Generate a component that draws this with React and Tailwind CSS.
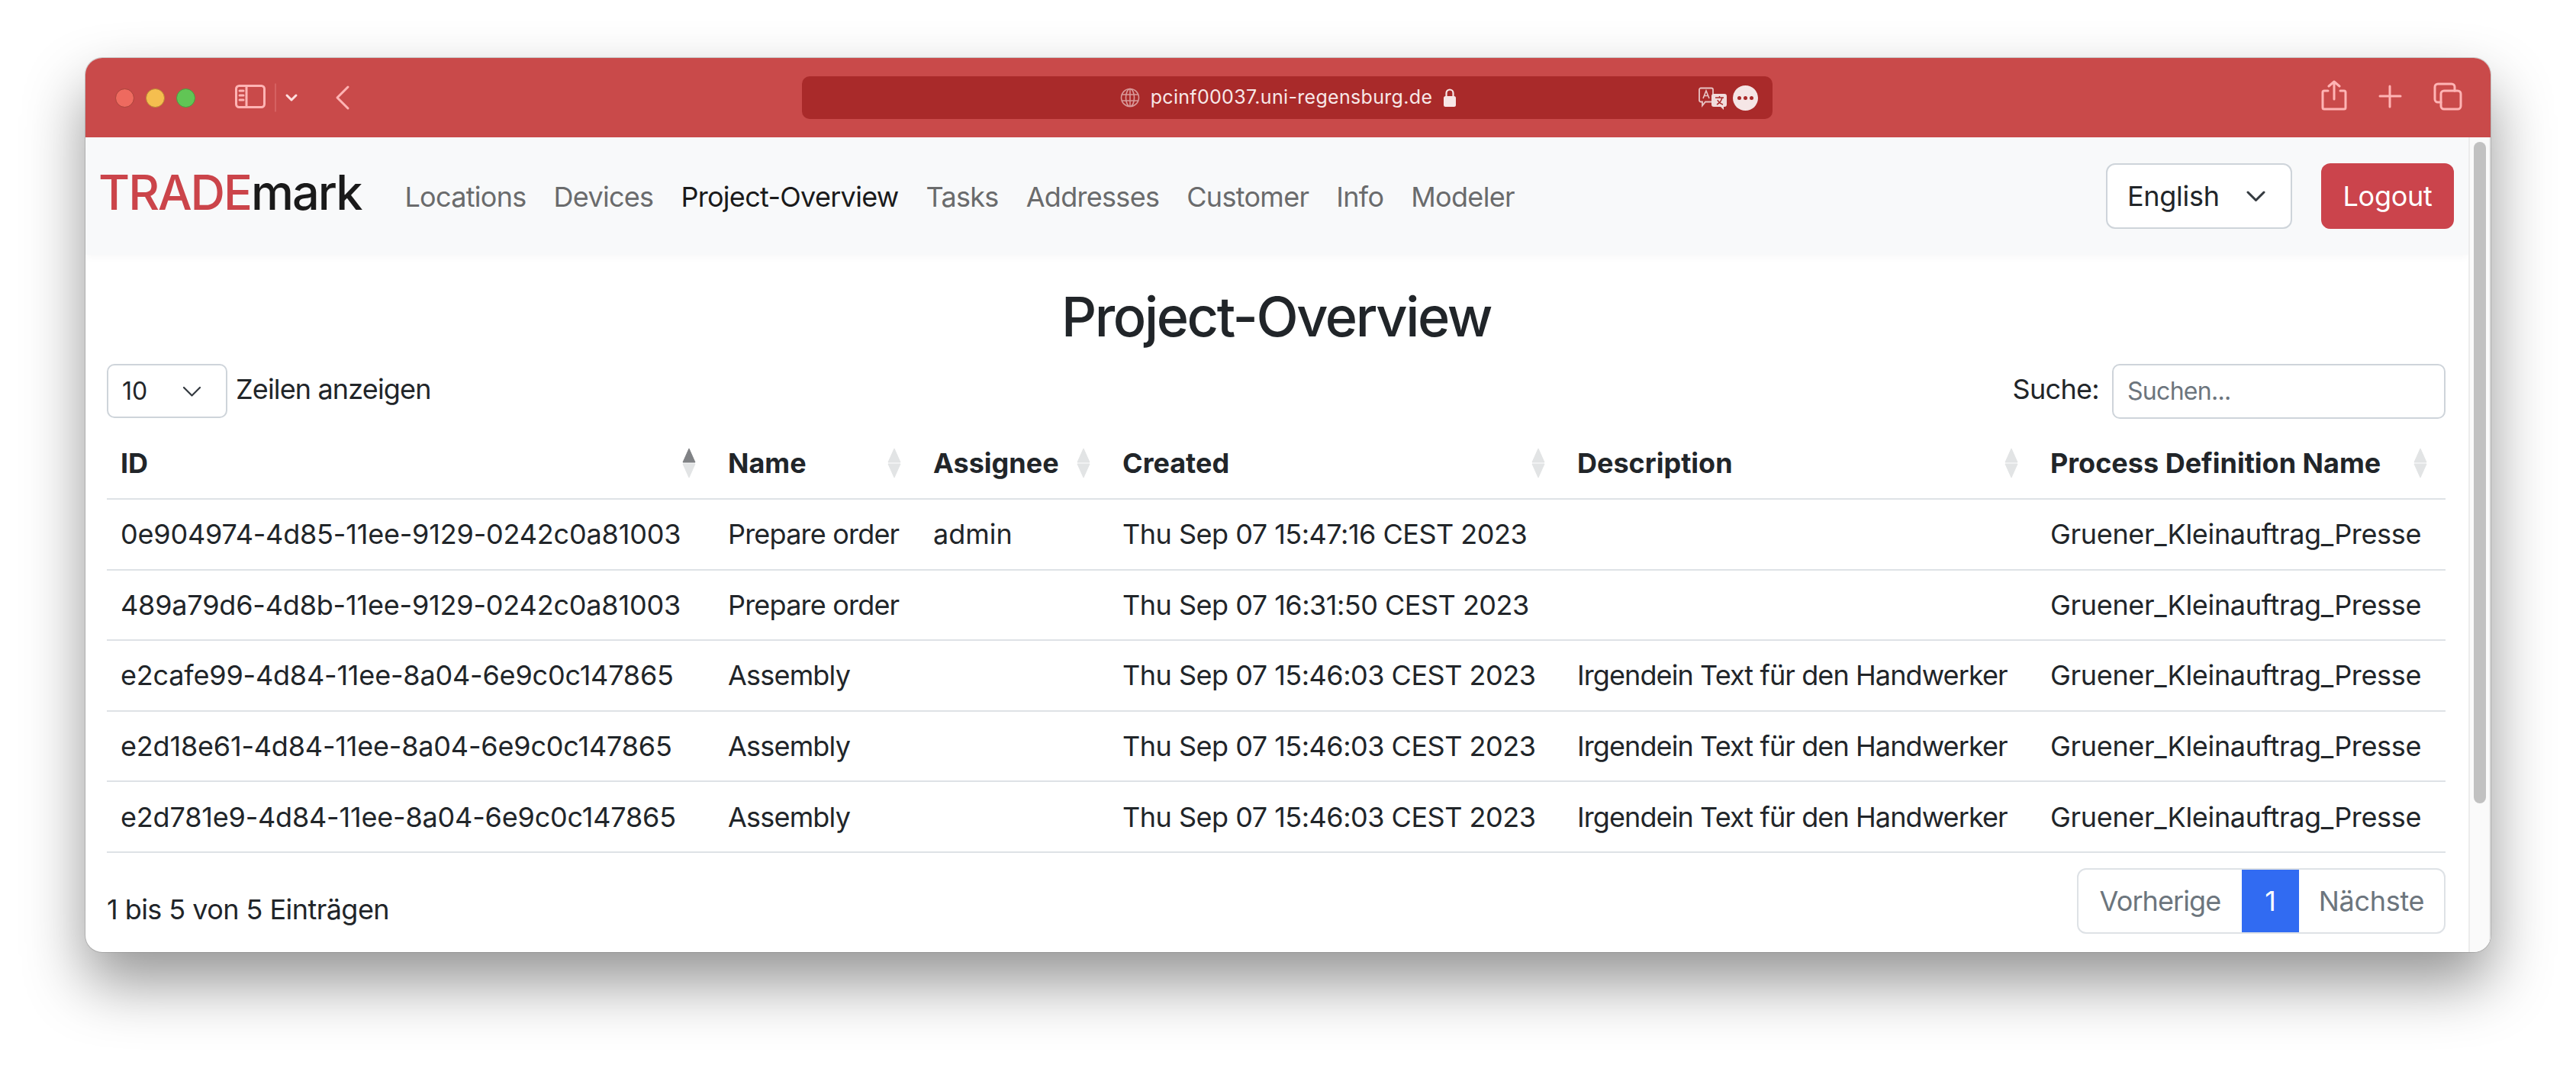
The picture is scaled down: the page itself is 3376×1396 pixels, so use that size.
const navItems = ['Locations', 'Devices', 'Project-Overview', 'Tasks', 'Addresses', 'Customer', 'Info', 'Modeler'];

const columns = [
  { label: 'ID', width: 'w-[796px]', active: true },
  { label: 'Name', width: 'w-[269px]' },
  { label: 'Assignee', width: 'w-[248px]' },
  { label: 'Created', width: 'w-[596px]' },
  { label: 'Description', width: 'w-[620px]' },
  { label: 'Process Definition Name', width: 'w-[536px]' },
];

// letter spacing per column, the reference font runs a bit narrower than Inter
const cellTracking = [
  'tracking-[-0.18px]',
  'tracking-[-0.8px]',
  'tracking-[0px]',
  'tracking-[-0.5px]',
  'tracking-[-0.9px]',
  'tracking-[-0.32px]',
];

const rows = [
  ['0e904974-4d85-11ee-9129-0242c0a81003', 'Prepare order', 'admin', 'Thu Sep 07 15:47:16 CEST 2023', '', 'Gruener_Kleinauftrag_Presse'],
  ['489a79d6-4d8b-11ee-9129-0242c0a81003', 'Prepare order', '', 'Thu Sep 07 16:31:50 CEST 2023', '', 'Gruener_Kleinauftrag_Presse'],
  ['e2cafe99-4d84-11ee-8a04-6e9c0c147865', 'Assembly', '', 'Thu Sep 07 15:46:03 CEST 2023', 'Irgendein Text für den Handwerker', 'Gruener_Kleinauftrag_Presse'],
  ['e2d18e61-4d84-11ee-8a04-6e9c0c147865', 'Assembly', '', 'Thu Sep 07 15:46:03 CEST 2023', 'Irgendein Text für den Handwerker', 'Gruener_Kleinauftrag_Presse'],
  ['e2d781e9-4d84-11ee-8a04-6e9c0c147865', 'Assembly', '', 'Thu Sep 07 15:46:03 CEST 2023', 'Irgendein Text für den Handwerker', 'Gruener_Kleinauftrag_Presse'],
];

function SortIcon({ active }) {
  return (
    <svg width="20" height="40" viewBox="0 0 20 40" className="absolute right-[23px] top-[26px]">
      <path d="M10 1 L18 19 L2 19 Z" fill={active ? '#808285' : '#e2e4e5'} strokeLinejoin="round" stroke={active ? '#808285' : '#e2e4e5'} strokeWidth="1" />
      <path d="M10 39 L18 21 L2 21 Z" fill="#e2e4e5" strokeLinejoin="round" stroke="#e2e4e5" strokeWidth="1" />
    </svg>
  );
}

function SelectChevron({ width, height, strokeWidth }) {
  return (
    <svg width={width} height={height} viewBox="0 0 25 14" fill="none" stroke="#343a40" strokeWidth={strokeWidth} strokeLinecap="round" strokeLinejoin="round">
      <path d="M2 2l10.5 10.5L23 2" />
    </svg>
  );
}

function ToolbarIcons() {
  return (
    <svg width="3152" height="104" viewBox="112 76 3152 104" className="pointer-events-none absolute left-0 top-0" fill="none" stroke="#ffb4b4" strokeWidth="3" strokeLinecap="round" strokeLinejoin="round">
      {/* sidebar */}
      <rect x="309.5" y="112.5" width="37" height="28" rx="4" />
      <path d="M323 113v27M314 119h5M314 125h5M314 131h5" />
      <path d="M361 110v36" stroke="#d96a6a" strokeWidth="1.5" />
      <path d="M376 125l6 6 6-6" stroke="#ffe0e0" strokeWidth="3" />
      {/* back */}
      <path d="M456 114l-14 14 14 14" />
      {/* share */}
      <path d="M3051 119h-5a2 2 0 0 0-2 2v20a2 2 0 0 0 2 2h26a2 2 0 0 0 2-2v-20a2 2 0 0 0-2-2h-5M3059 130v-23M3052 113l7-6 7 6" />
      {/* new tab */}
      <path d="M3132 113v27M3119 126h27" />
      {/* tabs */}
      <rect x="3199" y="119" width="26" height="24" rx="4" />
      <path d="M3199 134h-4a4 4 0 0 1-4-4v-16a4 4 0 0 1 4-4h18a4 4 0 0 1 4 4v5" />
    </svg>
  );
}

function AddressBar() {
  return (
    <div className="relative flex h-[56px] w-[1272px] items-center rounded-[10px] bg-[#a92a2a]">
      <div className="flex w-full items-center justify-center gap-[10px] pl-[4px] text-[25px] tracking-[0.32px] text-[#f7e7e7]">
        <svg width="26" height="26" viewBox="0 0 26 26" fill="none" stroke="#d99a9a" strokeWidth="1.6">
          <circle cx="13" cy="13" r="11.5" />
          <ellipse cx="13" cy="13" rx="5.5" ry="11.5" />
          <path d="M13 1.5v23M2 9h22M2 17h22" />
        </svg>
        <span className="ml-[4px]">pcinf00037.uni-regensburg.de</span>
        <svg width="18" height="26" viewBox="0 0 18 26" className="ml-[4px]">
          <path d="M4.5 12V7a4.5 4.5 0 0 1 9 0v5" fill="none" stroke="#f7e7e7" strokeWidth="2.2" />
          <rect x="1" y="11" width="16" height="14" rx="2.5" fill="#f7e7e7" />
        </svg>
      </div>
      <svg width="38" height="30" viewBox="0 0 38 30" className="absolute left-[1175px] top-[14px]">
        <path d="M3 1.5h14a2 2 0 0 1 2 2v14a2 2 0 0 1-2 2H9l-4 5v-5H3a2 2 0 0 1-2-2v-14a2 2 0 0 1 2-2Z" fill="none" stroke="#e8c4c4" strokeWidth="1.8" />
        <path d="M6 15l4-10 4 10M7.5 11.5h5" fill="none" stroke="#e8c4c4" strokeWidth="1.6" />
        <path d="M20 9h14a3 3 0 0 1 3 3v11a3 3 0 0 1-3 3h-1v4l-4-4h-9a3 3 0 0 1-3-3V12a3 3 0 0 1 3-3Z" fill="#f1dcdc" />
        <path d="M22 14h11M27.5 12v2M24 23c4-2 6-5 7-9M25 17c1 3 4 5 7 6" fill="none" stroke="#a92a2a" strokeWidth="1.5" />
      </svg>
      <div className="absolute left-[1220px] top-[12px] flex h-[33px] w-[33px] items-center justify-center gap-[3px] rounded-full bg-[#f5e6e6]">
        <span className="h-[5px] w-[5px] rounded-full bg-[#a92a2a]" />
        <span className="h-[5px] w-[5px] rounded-full bg-[#a92a2a]" />
        <span className="h-[5px] w-[5px] rounded-full bg-[#a92a2a]" />
      </div>
    </div>
  );
}

export default function App() {
  return (
    <div className="h-[1396px] w-[3376px] overflow-hidden bg-white pl-[112px] pt-[76px] font-['Inter',sans-serif] text-[#212529]">
      <div className="relative flex h-[1172px] w-[3152px] flex-col overflow-hidden rounded-[22px] bg-white shadow-[0_0_0_1px_rgba(120,120,120,0.35),0_40px_80px_rgba(0,0,0,0.42)]">
        {/* title bar */}
        <div className="relative flex h-[104px] shrink-0 justify-center bg-[#c94a4a] pr-[3px] pt-[24px]">
          <div className="absolute left-[39px] top-[40px] flex gap-[15px]">
            <span className="h-[25px] w-[25px] rounded-full border border-[#a8433b] bg-[#ee6a5f]" />
            <span className="h-[25px] w-[25px] rounded-full border border-[#b98a35] bg-[#f5be4f]" />
            <span className="h-[25px] w-[25px] rounded-full border border-[#4a9a3f] bg-[#61c555]" />
          </div>
          <ToolbarIcons />
          <AddressBar />
        </div>

        <div className="flex min-h-0 flex-1">
          <div className="min-w-0 flex-1">
            {/* navbar */}
            <nav className="flex h-[154px] items-center bg-[#f8f9fa] pl-[17px] pr-[19px] shadow-[0_3px_10px_rgba(0,0,0,0.03)]">
              <a className="mb-[10px] text-[63px] leading-none font-medium tracking-[-2px] text-[#1a1a1a]">
                <span className="text-[#cb444a]">TRADE</span>mark
              </a>
              <ul className="ml-[57px] mt-[2px] flex gap-[36px] text-[36px] tracking-[-0.7px] text-[#6a6b6c]">
                {navItems.map((item) => (
                  <li key={item} className={item === 'Project-Overview' ? 'text-[#1a1a1a]' : ''}>{item}</li>
                ))}
              </ul>
              <div className="ml-auto flex h-[86px] w-[244px] items-center justify-between rounded-[12px] border-2 border-[#ced4da] bg-white pl-[26px] pr-[33px] text-[36px] tracking-[-0.3px]">
                English
                <SelectChevron width={25} height={14} strokeWidth={3} />
              </div>
              <button className="ml-[38px] h-[86px] w-[174px] rounded-[12px] bg-[#cb444c] text-[36px] tracking-[-0.3px] text-white">Logout</button>
            </nav>

            <main className="pl-[28px] pr-[30px]">
              <h1 className="mt-[38px] text-center text-[72px] leading-[86px] font-[550] tracking-[-2.4px]">Project-Overview</h1>

              <div className="mt-[19px] flex items-start justify-between text-[36px]">
                <div className="flex items-center gap-[11px]">
                  <div className="flex h-[71px] w-[158px] items-center justify-between rounded-[10px] border-2 border-[#ced4da] pl-[18px] pr-[32px] text-[32px]">
                    10
                    <SelectChevron width={25} height={14} strokeWidth={2.2} />
                  </div>
                  <span className="mb-[6px] tracking-[-0.85px]">Zeilen anzeigen</span>
                </div>
                <div className="flex items-center gap-[17px]">
                  <span className="mb-[6px] tracking-[-0.7px]">Suche:</span>
                  <div className="flex h-[72px] w-[437px] items-center rounded-[10px] border-2 border-[#ced4da] pl-[18px] text-[32px] tracking-[-0.7px] text-[#6c757d]">Suchen...</div>
                </div>
              </div>

              <table className="mt-[12px] w-[3065px] table-fixed border-collapse text-[36px]">
                <thead>
                  <tr className="h-[93px] border-b-2 border-[#dee2e6]">
                    {columns.map((col) => (
                      <th key={col.label} className={`relative px-[18px] text-left font-bold ${col.width}`}>
                        {col.label}
                        <SortIcon active={col.active} />
                      </th>
                    ))}
                  </tr>
                </thead>
                <tbody>
                  {rows.map((row) => (
                    <tr key={row[0]} className="h-[92.6px] border-b-2 border-[#dee2e6]">
                      {row.map((cell, i) => (
                        <td key={i} className={`overflow-visible whitespace-nowrap px-[18px] ${cellTracking[i]}`}>{cell}</td>
                      ))}
                    </tr>
                  ))}
                </tbody>
              </table>

              <div className="mt-[20px] flex items-center justify-between text-[36px]">
                <span className="mt-[22px] tracking-[-0.55px]">1 bis 5 von 5 Einträgen</span>
                <div className="flex h-[86px] w-[483px] items-stretch overflow-hidden rounded-[12px] border-2 border-[#dee2e6] text-[#6c757d]">
                  <span className="flex flex-1 items-center justify-center tracking-[-0.9px]">Vorherige</span>
                  <span className="-my-[2px] flex w-[75px] items-center justify-center bg-[#316bf2] text-white">1</span>
                  <span className="flex w-[190px] items-center justify-center tracking-[-0.3px]">Nächste</span>
                </div>
              </div>
            </main>
          </div>

          {/* scrollbar */}
          <div className="w-[29px] shrink-0 border-x-2 border-[#ececec] bg-[#fafafa] pl-[5px] pt-[6px]">
            <div className="h-[867px] w-[16px] rounded-full bg-[#c1c1c1]" />
          </div>
        </div>
      </div>
    </div>
  );
}
